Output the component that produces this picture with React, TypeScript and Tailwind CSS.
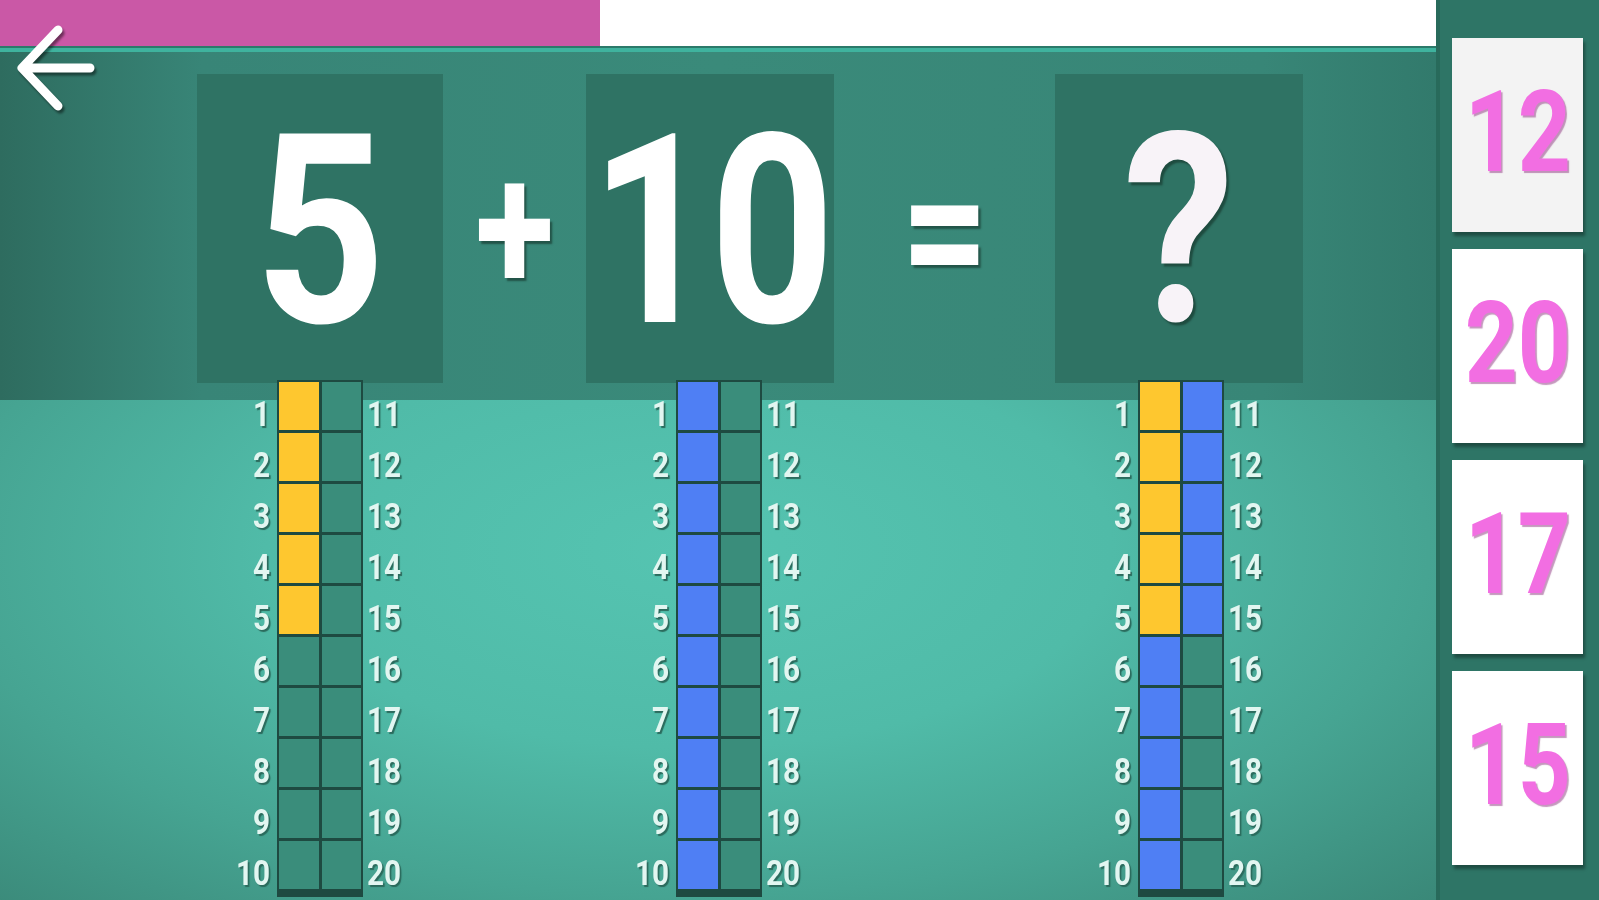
import React from 'react';

const ROWS = Array.from({ length: 10 }, (_, i) => i);

type Cell = 'yellow' | 'blue' | 'empty';

const cellColor: Record<Cell, string> = {
  yellow: 'bg-[#fec72f]',
  blue: 'bg-[#4f7ff4]',
  empty: 'bg-[#3a8d7b]',
};

function Strip({ left, right }: { left: (i: number) => Cell; right: (i: number) => Cell }) {
  return (
    <div className="flex items-start">
      {/* left labels */}
      <div className="flex w-[60px] flex-col pt-[2px] pr-[7px]">
        {ROWS.map((i) => (
          <div
            key={i}
            className="flex h-[51px] items-end justify-end pb-[1px] text-[35px] font-bold leading-none text-[#e2f6f1] [text-shadow:2px_2px_1px_#2b6b5d]"
          >
            <span className="inline-block origin-right scale-x-[0.85]">{i + 1}</span>
          </div>
        ))}
      </div>

      {/* cells */}
      <div className="grid w-[86px] grid-cols-2 gap-[3px] bg-[#1e4a41] p-[2px] pb-[8px]">
        {ROWS.map((i) => (
          <React.Fragment key={i}>
            <div className={`h-[48px] ${cellColor[left(i)]}`} />
            <div className={`h-[48px] ${cellColor[right(i)]}`} />
          </React.Fragment>
        ))}
      </div>

      {/* right labels */}
      <div className="flex w-[60px] flex-col pt-[2px] pl-[4px]">
        {ROWS.map((i) => (
          <div
            key={i}
            className="flex h-[51px] items-end justify-start pb-[1px] text-[35px] font-bold leading-none text-[#e2f6f1] [text-shadow:2px_2px_1px_#2b6b5d]"
          >
            <span className="inline-block origin-left scale-x-[0.85]">{i + 11}</span>
          </div>
        ))}
      </div>
    </div>
  );
}

function NumberBox({ children, width }: { children: React.ReactNode; width: string }) {
  return (
    <div className={`flex h-[309px] items-center justify-center bg-[#2f7364] ${width}`}>{children}</div>
  );
}

function AnswerCard({ value, selected }: { value: number; selected?: boolean }) {
  return (
    <div
      className={`flex h-[194px] w-[131px] items-center justify-center shadow-[2px_4px_3px_rgba(0,0,0,0.35)] ${
        selected ? 'bg-[#f3f3f3]' : 'bg-white'
      }`}
    >
      <span className="-mt-[6px] inline-block scale-x-[0.82] text-[113px] font-bold leading-none text-[#f26ee2] [text-shadow:2px_2px_1px_rgba(140,50,125,0.5)]">
        {value}
      </span>
    </div>
  );
}

export default function App() {
  return (
    <div className="relative flex h-[900px] w-[1599px] overflow-hidden [font-family:Roboto,'Noto_Sans',sans-serif]">
      {/* Main game area */}
      <div className="flex w-[1436px] flex-col">
        {/* Progress bar */}
        <div className="flex h-[46px]">
          <div className="w-[600px] bg-[#ca58a6]" />
          <div className="flex-1 bg-white" />
        </div>
        <div className="h-[2px] bg-[#2c7a6a]" />
        <div className="h-[4px] bg-[#3fb39e]" />

        {/* Equation band */}
        <div className="flex h-[348px] items-start bg-[linear-gradient(to_right,#2e6c5f_0%,#388577_14%,#3a8a7a_50%,#388677_88%,#327a6c_100%)] pt-[22px] pl-[197px]">
          <NumberBox width="w-[246px]">
            <span className="mt-[6px] inline-block scale-x-[0.86] text-[265px] font-bold leading-none text-white">5</span>
          </NumberBox>
          <div className="flex h-[309px] w-[143px] items-center justify-center">
            <span className="inline-block scale-x-[0.8] text-[182px] font-bold leading-none text-white [text-shadow:3px_3px_2px_rgba(20,50,40,0.6)]">
              +
            </span>
          </div>
          <NumberBox width="w-[248px]">
            <span className="mt-[6px] inline-block scale-x-[0.82] text-[265px] font-bold leading-none tracking-[-6px] text-white">
              10
            </span>
          </NumberBox>
          <div className="flex h-[309px] w-[221px] items-center justify-center">
            <span className="mt-[4px] inline-block scale-x-[0.9] scale-y-[1.08] text-[170px] font-bold leading-none text-white [text-shadow:3px_3px_2px_rgba(20,50,40,0.6)]">
              =
            </span>
          </div>
          <NumberBox width="w-[248px]">
            <span className="mt-[4px] inline-block scale-x-[0.84] text-[265px] font-bold leading-none text-[#f8f3f8] [text-shadow:3px_3px_2px_rgba(20,50,40,0.6)]">
              ?
            </span>
          </NumberBox>
        </div>

        {/* Counting strips */}
        <div className="flex-1 bg-[radial-gradient(ellipse_at_48%_30%,#55c4b1_0%,#50bba8_40%,#46a492_70%,#3a8878_100%)]">
          <div className="-mt-[20px] flex items-start pl-[217px]">
            <Strip left={(i) => (i < 5 ? 'yellow' : 'empty')} right={() => 'empty'} />
            <div className="w-[193px]" />
            <Strip left={() => 'blue'} right={() => 'empty'} />
            <div className="w-[256px]" />
            <Strip left={(i) => (i < 5 ? 'yellow' : 'blue')} right={(i) => (i < 5 ? 'blue' : 'empty')} />
          </div>
        </div>
      </div>

      {/* Answer panel */}
      <div className="flex flex-1 border-l-[4px] border-[#286a5b] bg-[#2e7566]">
        <div className="flex flex-col gap-[17px] pt-[38px] pl-[12px]">
          <AnswerCard value={12} selected />
          <AnswerCard value={20} />
          <AnswerCard value={17} />
          <AnswerCard value={15} />
        </div>
      </div>

      {/* Back arrow */}
      <svg
        className="absolute top-0 left-0 h-[120px] w-[110px] drop-shadow-[2px_3px_1px_rgba(0,0,0,0.45)]"
        viewBox="0 0 110 120"
        fill="none"
      >
        <path d="M90 68 H24 M58 30 L22 68 L58 106" stroke="white" strokeWidth="9" strokeLinecap="round" strokeLinejoin="round" />
      </svg>
    </div>
  );
}
